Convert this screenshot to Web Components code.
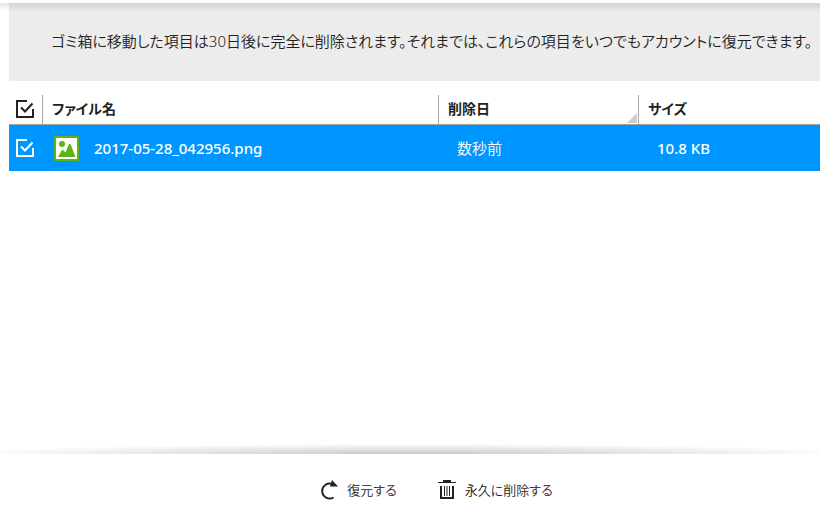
<!DOCTYPE html>
<html lang="ja">
<head>
<meta charset="utf-8">
<meta name="viewport" content="width=device-width, initial-scale=1">
<title>ゴミ箱</title>
<style>
  body {
    margin: 0;
    background: #fff;
    color: #222;
    font-family: "Noto Sans", "Noto Sans CJK JP", sans-serif;
    font-size: 15px;
    font-feature-settings: "palt";
  }
</style>
</head>
<body>
<trash-page>
  <notice-bar slot="notice">ゴミ箱に移動した項目は30日後に完全に削除されます。それまでは、これらの項目をいつでもアカウントに復元できます。</notice-bar>
  <file-table></file-table>
  <action-bar slot="actions">
    <action-button icon="restore">復元する</action-button>
    <action-button icon="trash">永久に削除する</action-button>
  </action-bar>
</trash-page>

<script>
const makeTemplate = (html) => {
  const template = document.createElement('template');
  template.innerHTML = html;
  return template;
};

class BaseElement extends HTMLElement {
  constructor() {
    super();
    this._shadowRoot = this.attachShadow({ mode: 'open' });
    this._shadowRoot.appendChild(this.constructor.template.content.cloneNode(true));
  }
}

class TrashPage extends BaseElement {}
TrashPage.template = makeTemplate(`
  <style>
    :host {
      display: flex;
      flex-direction: column;
      box-sizing: border-box;
      min-height: 100vh;
      padding-top: 3px;
    }
    .top {
      padding-left: 9px;
      background: linear-gradient(rgba(0, 0, 0, 0.1), rgba(0, 0, 0, 0)) top / 100% 8px no-repeat;
    }
    main {
      flex: 1;
      padding-left: 9px;
    }
  </style>
  <div class="top"><slot name="notice"></slot></div>
  <main><slot></slot></main>
  <slot name="actions"></slot>
`);

class NoticeBar extends BaseElement {}
NoticeBar.template = makeTemplate(`
  <style>
    :host {
      display: block;
      padding: 27px 0 29px 42px;
      background: linear-gradient(#d6d6d6, #d9d9d9 3px, #ececec 9px);
      font-size: 15px;
      font-weight: 350;
      line-height: 22px;
    }
    p {
      margin: 0;
    }
  </style>
  <p><slot></slot></p>
`);

class CheckBox extends BaseElement {
  connectedCallback() {
    this.$input = this._shadowRoot.querySelector('input');
    this.$input.checked = this.hasAttribute('checked');
    this.$input.setAttribute('aria-label', this.getAttribute('label'));
  }
}
CheckBox.template = makeTemplate(`
  <style>
    :host {
      display: block;
      width: 20px;
      height: 20px;
    }
    label {
      display: grid;
    }
    input, svg {
      grid-area: 1 / 1;
      width: 20px;
      height: 20px;
      margin: 0;
    }
    input {
      appearance: none;
    }
    svg {
      pointer-events: none;
      fill: none;
      stroke: currentColor;
      stroke-width: 2;
    }
    input:not(:checked) + svg .tick {
      display: none;
    }
  </style>
  <label>
    <input type="checkbox">
    <svg viewBox="0 0 20 20">
      <path d="M12 2H2v16h16v-8"/>
      <path class="tick" d="M6 8.5l4 4L17.5 4.5"/>
    </svg>
  </label>
`);

class FileTable extends BaseElement {}
FileTable.template = makeTemplate(`
  <style>
    :host {
      display: block;
      padding-top: 14px;
    }
    table {
      width: 100%;
      table-layout: fixed;
      border-collapse: separate;
      border-spacing: 0;
    }
    .check { width: 33px; }
    .date { width: 200px; }
    .size { width: 182px; }
    th, td {
      box-sizing: border-box;
      padding: 0;
      text-align: left;
      white-space: nowrap;
    }
    th {
      position: relative;
      height: 30px;
      padding: 0 0 2px 9px;
      border-left: 1px solid #a8a8a8;
      border-bottom: 1px solid #a0a0a0;
      font-size: 14px;
      line-height: 20px;
    }
    th:first-child {
      padding-left: 6px;
      border-left: 0;
    }
    td {
      height: 46px;
      padding-left: 19px;
      background: #0096ff;
      color: #fff;
      font-weight: 500;
      line-height: 20px;
    }
    td:first-child {
      padding-left: 6px;
    }
    td.name {
      padding-left: 12px;
    }
    td.deleted {
      font-weight: 350;
    }
    .file {
      display: flex;
      align-items: center;
      gap: 15px;
    }
    .grip::after {
      content: "";
      position: absolute;
      right: 1px;
      bottom: 1px;
      border-left: 10px solid transparent;
      border-bottom: 10px solid #ccc;
    }
  </style>
  <table>
    <colgroup>
      <col class="check"><col><col class="date"><col class="size">
    </colgroup>
    <thead>
      <tr>
        <th><check-box checked label="すべて選択"></check-box></th>
        <th>ファイル名</th>
        <th class="grip">削除日</th>
        <th>サイズ</th>
      </tr>
    </thead>
    <tbody>
      <tr>
        <td><check-box checked label="選択"></check-box></td>
        <td class="name">
          <div class="file">
            <svg width="25" height="25" viewBox="0 0 25 25">
              <rect width="25" height="25" rx="1" fill="#5bb613"/>
              <path d="M2 2h21v21H2z" fill="#fff"/>
              <circle cx="8" cy="8" r="3" fill="#5bb613"/>
              <path d="M4 21l4-7h1l2.500 2.500L15 8h1.500L21.500 21z" fill="#5bb613"/>
            </svg>
            <span>2017-05-28_042956.png</span>
          </div>
        </td>
        <td class="deleted">数秒前</td>
        <td>10.8 KB</td>
      </tr>
    </tbody>
  </table>
`);

class ActionBar extends BaseElement {}
ActionBar.template = makeTemplate(`
  <style>
    :host {
      display: block;
    }
    .shadow {
      height: 10px;
      background: radial-gradient(55% 100% at 50% 100%, #c8c8c8, #fff);
    }
    .buttons {
      display: flex;
      justify-content: center;
      gap: 40px;
      padding: 25px 0 24px 52px;
    }
  </style>
  <div class="shadow"></div>
  <div class="buttons"><slot></slot></div>
`);

const icons = {
  restore: `
    <path d="M14.500 17.500A7.500 7.500 0 1 1 14 4.300" fill="none" stroke="currentColor" stroke-width="2"/>
    <path d="M13 0L19 6.500H11z" fill="currentColor"/>`,
  trash: `
    <path d="M1 2h18v1H1z M6 0h8v2H6z" fill="currentColor"/>
    <path d="M4 6v12h12V6" fill="none" stroke="currentColor" stroke-width="2"/>
    <path d="M7.500 6v10M10 6v10M12.500 6v10" stroke="currentColor"/>`,
};

class ActionButton extends BaseElement {
  connectedCallback() {
    this._shadowRoot.querySelector('svg').innerHTML = icons[this.getAttribute('icon')];
  }
}
ActionButton.template = makeTemplate(`
  <style>
    :host {
      display: block;
    }
    button {
      display: flex;
      align-items: center;
      gap: 8px;
      padding: 0;
      border: 0;
      background: none;
      color: inherit;
      font: inherit;
      font-feature-settings: inherit;
      font-size: 13px;
      font-weight: 350;
      line-height: 22px;
      cursor: pointer;
    }
  </style>
  <button type="button">
    <svg width="20" height="20" viewBox="0 0 20 20"></svg>
    <slot></slot>
  </button>
`);

customElements.define('trash-page', TrashPage);
customElements.define('notice-bar', NoticeBar);
customElements.define('check-box', CheckBox);
customElements.define('file-table', FileTable);
customElements.define('action-bar', ActionBar);
customElements.define('action-button', ActionButton);
</script>
</body>
</html>
